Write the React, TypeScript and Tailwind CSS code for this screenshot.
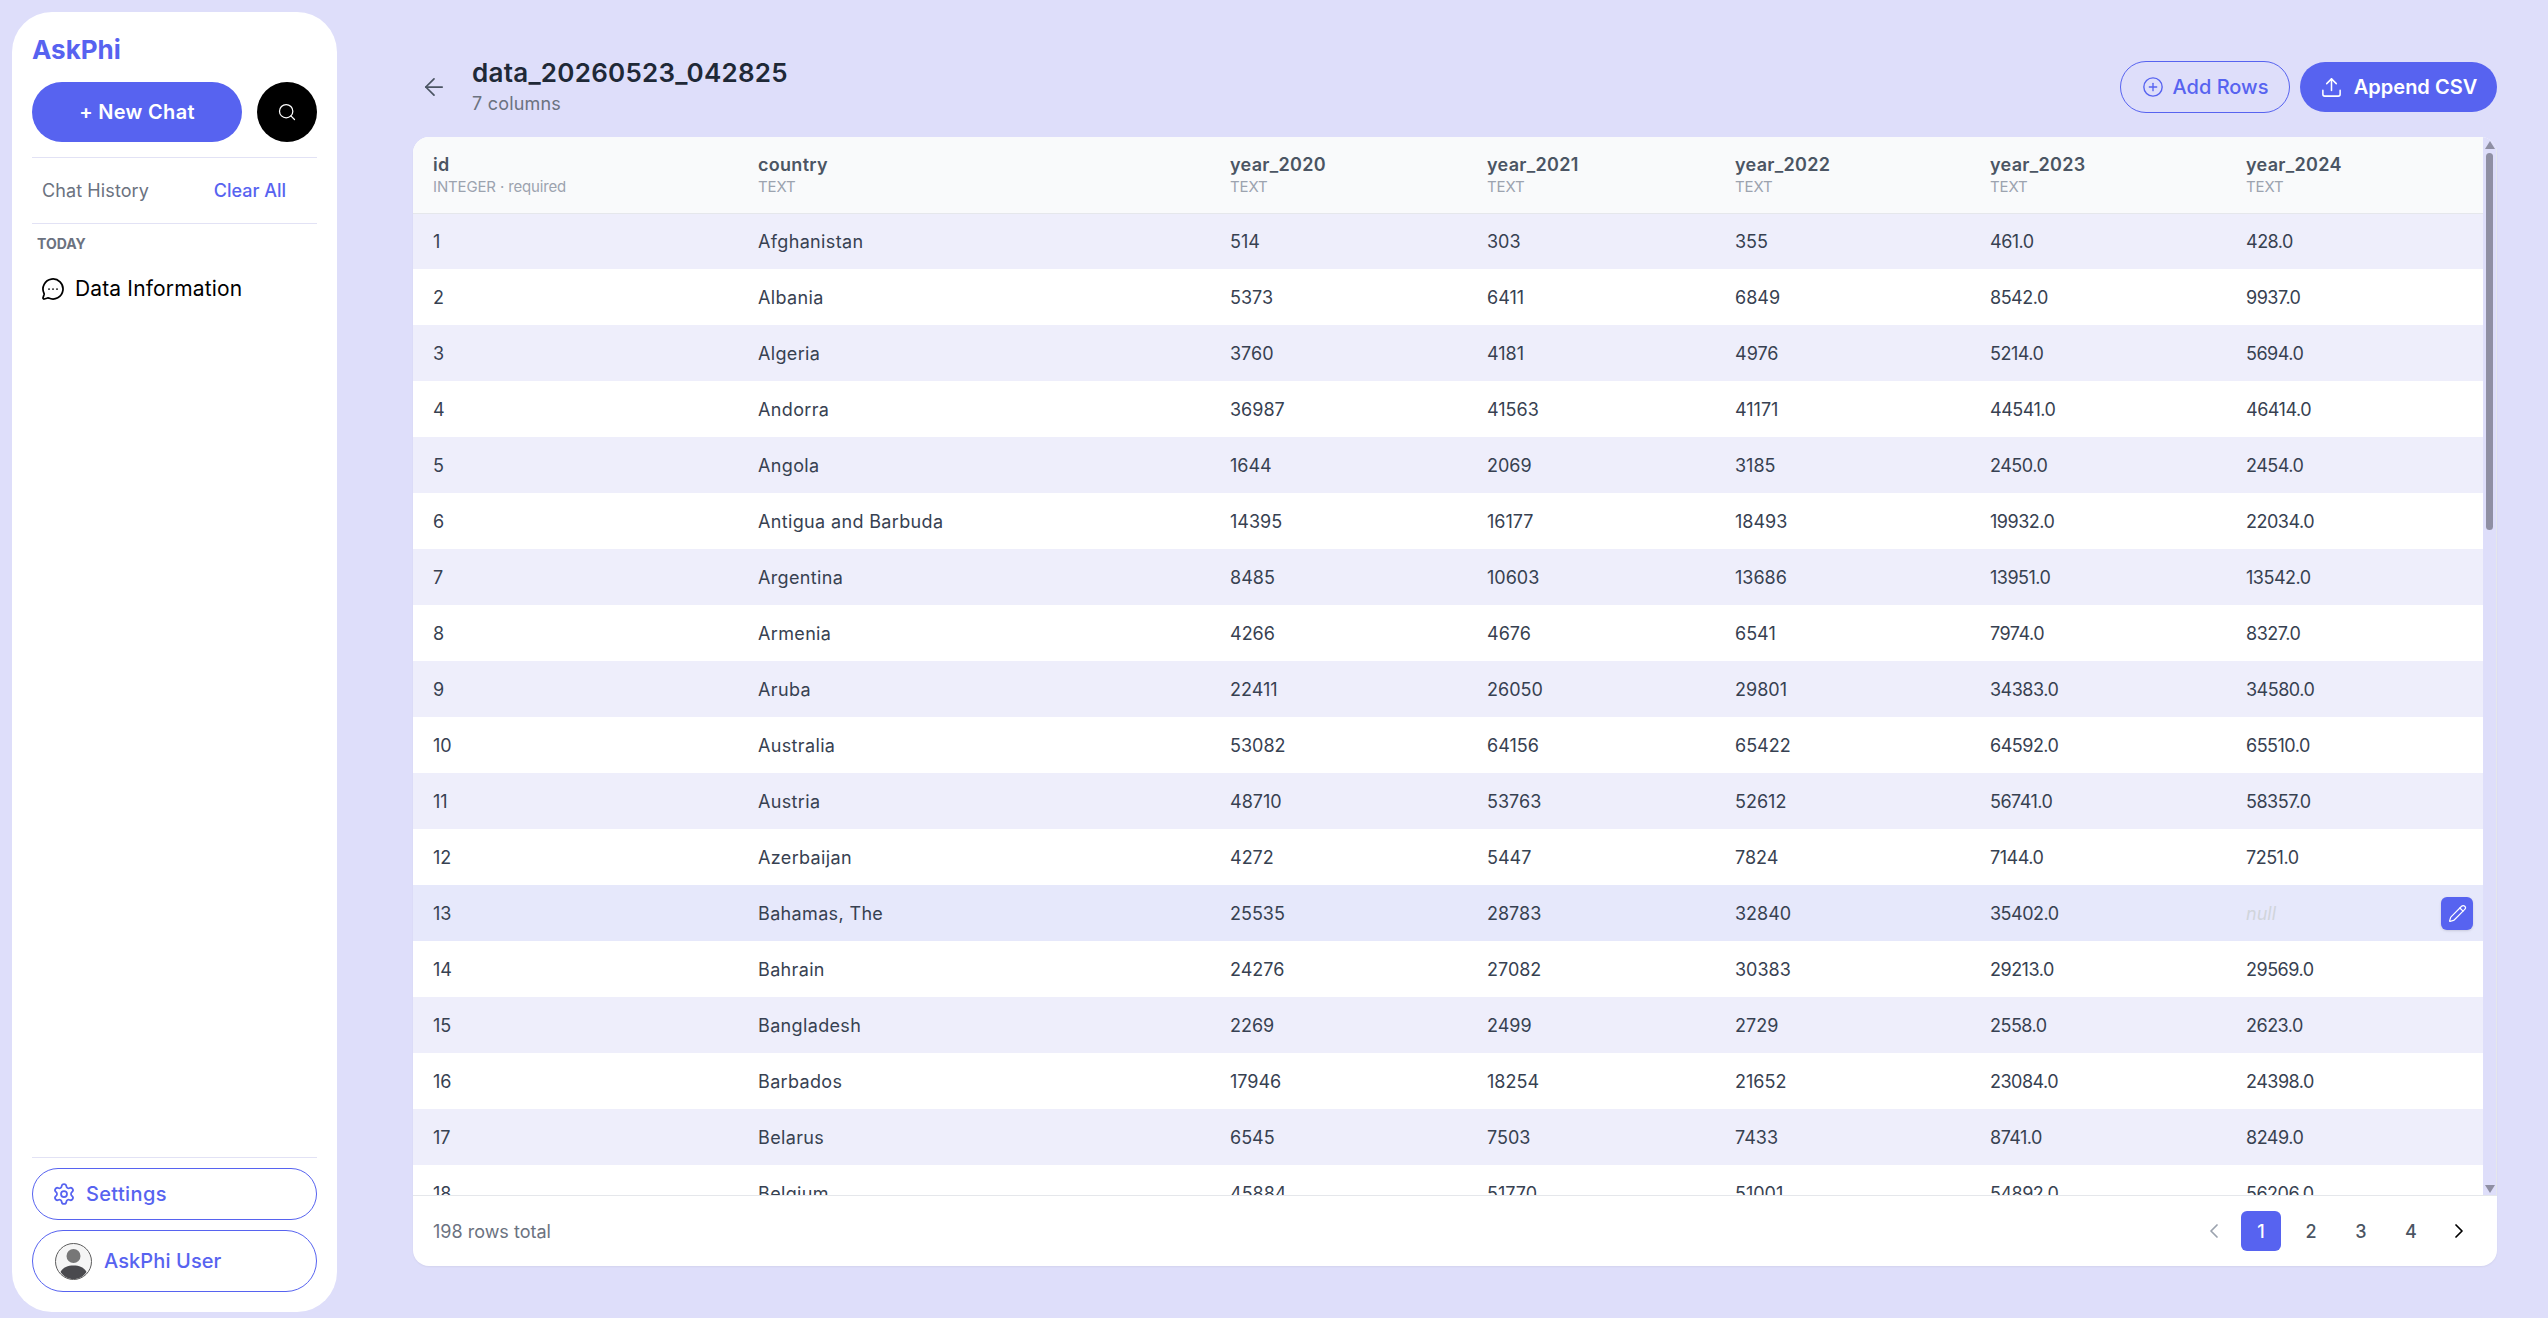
import React from "react";
import { Search, MessageCircleMore, Settings, ArrowLeft, CirclePlus, Upload, Pencil, ChevronLeft, ChevronRight } from "lucide-react";

const rows: string[][] = [
  ["1", "Afghanistan", "514", "303", "355", "461.0", "428.0"],
  ["2", "Albania", "5373", "6411", "6849", "8542.0", "9937.0"],
  ["3", "Algeria", "3760", "4181", "4976", "5214.0", "5694.0"],
  ["4", "Andorra", "36987", "41563", "41171", "44541.0", "46414.0"],
  ["5", "Angola", "1644", "2069", "3185", "2450.0", "2454.0"],
  ["6", "Antigua and Barbuda", "14395", "16177", "18493", "19932.0", "22034.0"],
  ["7", "Argentina", "8485", "10603", "13686", "13951.0", "13542.0"],
  ["8", "Armenia", "4266", "4676", "6541", "7974.0", "8327.0"],
  ["9", "Aruba", "22411", "26050", "29801", "34383.0", "34580.0"],
  ["10", "Australia", "53082", "64156", "65422", "64592.0", "65510.0"],
  ["11", "Austria", "48710", "53763", "52612", "56741.0", "58357.0"],
  ["12", "Azerbaijan", "4272", "5447", "7824", "7144.0", "7251.0"],
  ["13", "Bahamas, The", "25535", "28783", "32840", "35402.0", ""],
  ["14", "Bahrain", "24276", "27082", "30383", "29213.0", "29569.0"],
  ["15", "Bangladesh", "2269", "2499", "2729", "2558.0", "2623.0"],
  ["16", "Barbados", "17946", "18254", "21652", "23084.0", "24398.0"],
  ["17", "Belarus", "6545", "7503", "7433", "8741.0", "8249.0"],
  ["18", "Belgium", "45884", "51770", "51001", "54892.0", "56206.0"],
];

const columns = [
  { name: "id", type: "INTEGER · required" },
  { name: "country", type: "TEXT" },
  { name: "year_2020", type: "TEXT" },
  { name: "year_2021", type: "TEXT" },
  { name: "year_2022", type: "TEXT" },
  { name: "year_2023", type: "TEXT" },
  { name: "year_2024", type: "TEXT" },
];

export default function App() {
  return (
    <div className="flex h-[1318px] w-[2548px] overflow-hidden bg-[#dedefa] font-['Inter',sans-serif]">
      <aside className="m-3 mr-0 flex h-[1300px] w-[325px] flex-col rounded-[40px] bg-white px-5 pb-5">
        <div className="mt-[18px] h-[52px] text-[26px] font-bold leading-[40px] text-[#5763f0]">AskPhi</div>
        <div className="flex gap-[15px]">
          <button className="h-[60px] w-[210px] rounded-full bg-[#5763f0] text-[20px] font-semibold tracking-[0.3px] text-white">+ New Chat</button>
          <button className="flex h-[60px] w-[60px] items-center justify-center rounded-full bg-black text-white">
            <Search size={20} strokeWidth={1.5} />
          </button>
        </div>
        <div className="mt-[15px] flex h-[67px] items-center justify-between border-y border-[#e2e2f5] pl-[10px] pr-[31px] text-[18px]">
          <span className="tracking-[0.1px] text-[#6b7280]">Chat History</span>
          <span className="font-medium text-[#5763f0]">Clear All</span>
        </div>
        <div className="mt-[11px] pl-[5px] text-[14px] font-bold leading-[18px] text-[#6b7280]">TODAY</div>
        <div className="mt-[21px] flex items-center gap-[10px] pl-[9px] text-[21px] leading-[30px] text-black">
          <MessageCircleMore size={24} strokeWidth={1.75} />
          <span className="tracking-[0.15px]">Data Information</span>
        </div>
        <div className="mt-auto border-t border-[#e2e2f5] pt-[10px]">
          <button className="flex h-[52px] w-full items-center gap-[10px] rounded-full border border-[#5763f0] pl-[19px] text-[20px] font-medium text-[#5763f0]">
            <Settings size={24} strokeWidth={1.75} />
            <span className="tracking-[0.35px]">Settings</span>
          </button>
          <button className="mt-[10px] flex h-[62px] w-full items-center gap-[12px] rounded-full border border-[#5763f0] pl-[22px] text-[20px] font-medium text-[#5763f0]">
            <svg width="37" height="37" viewBox="0 0 37 37">
              <circle cx="18.5" cy="18.5" r="18" fill="#f5f5f5" stroke="#5c5c5c" strokeWidth="1" />
              <circle cx="18.5" cy="13" r="7" fill="#777777" />
              <path d="M5.5 29 C8 24 13 22.5 18.5 22.5 C24 22.5 29 24 31.5 29 C28.5 33.5 24 36 18.5 36 C13 36 8.5 33.5 5.5 29 Z" fill="#4a4a4e" />
            </svg>
            <span className="tracking-[0.1px]">AskPhi User</span>
          </button>
        </div>
      </aside>

      <main className="ml-[76px] flex w-[2084px] flex-col pt-[55px]">
        <header className="flex h-[70px] items-start justify-between">
          <div className="flex">
            <div className="flex w-[59px] items-start pt-[18px] pl-[7px] text-[#4b5563]">
              <ArrowLeft size={28} strokeWidth={1.5} />
            </div>
            <div>
              <div className="text-[26px] font-semibold leading-[36px] tracking-[0.25px] text-[#1f2937]">data_20260523_042825</div>
              <div className="text-[18px] leading-[26px] tracking-[0.2px] text-[#6b7280]">7 columns</div>
            </div>
          </div>
          <div className="mt-[6px] flex items-center gap-[10px]">
            <button className="flex h-[52px] w-[170px] items-center justify-center gap-[9px] rounded-full border border-[#5763f0] text-[20px] font-medium text-[#5763f0]">
              <CirclePlus size={22} strokeWidth={1.5} />
              <span>Add Rows</span>
            </button>
            <button className="flex h-[50px] w-[197px] items-center justify-center gap-[11px] rounded-full bg-[#5763f0] text-[20px] font-semibold text-white">
              <Upload size={23} strokeWidth={1.6} />
              <span>Append CSV</span>
            </button>
          </div>
        </header>

        <section className="mt-[12px] flex h-[1129px] flex-col overflow-hidden rounded-[16px] bg-white shadow-[0_1px_2px_rgba(0,0,0,0.05)]">
          <div className="flex min-h-0 flex-1">
            <div className="w-[2070px] overflow-hidden">
              <table className="w-[2070px] table-fixed border-collapse">
                <colgroup>
                  <col className="w-[325px]" />
                  <col className="w-[472px]" />
                  <col className="w-[257px]" />
                  <col className="w-[248px]" />
                  <col className="w-[255px]" />
                  <col className="w-[256px]" />
                  <col className="w-[257px]" />
                </colgroup>
                <thead>
                  <tr className="h-[76px] border-b border-[#e5e7eb] bg-[#f9fafb]">
                    {columns.map((c) => (
                      <th key={c.name} className="pl-5 text-left align-middle font-normal">
                        <div className="text-[18px] font-semibold leading-[24px] tracking-[0.3px] text-[#4b5563]">{c.name}</div>
                        <div className="text-[15px] leading-[20px] tracking-[-0.15px] text-[#9ca3af]">{c.type}</div>
                      </th>
                    ))}
                  </tr>
                </thead>
                <tbody>
                  {rows.map((r, i) => (
                    <tr key={r[0]} className={i === 12 ? "h-14 bg-[#e6e8fb]" : i % 2 === 0 ? "h-14 bg-[#eeeefb]" : "h-14 bg-white"}>
                      {r.map((v, j) => (
                        <td
                          key={j}
                          className={
                            j === 1
                              ? "relative pl-5 text-[18px] tracking-[0.35px] text-[#374151]"
                              : j >= 5
                              ? "relative pl-5 text-[18px] tracking-[-0.5px] text-[#374151]"
                              : "relative pl-5 text-[18px] text-[#374151]"
                          }
                        >
                          {v === "" ? (
                            <>
                              <span className="text-[18px] italic tracking-normal text-[#d1d5db]">null</span>
                              <span className="absolute right-[10px] top-[12px] flex h-[33px] w-8 items-center justify-center rounded-[6px] bg-[#5763f0] text-white shadow-sm">
                                <Pencil size={19} strokeWidth={1.5} />
                              </span>
                            </>
                          ) : (
                            v
                          )}
                        </td>
                      ))}
                    </tr>
                  ))}
                </tbody>
              </table>
            </div>
            <div className="flex w-[14px] flex-col items-center border-r border-[#e5e7eb] bg-[#dedefa] pt-[4px] pb-[2px]">
              <svg width="10" height="8" viewBox="0 0 10 8" className="shrink-0 fill-[#8f8fa3]"><path d="M5 0 L10 8 L0 8 Z" /></svg>
              <div className="mt-[4px] h-[377px] w-[7px] rounded-full bg-[#8f8fa3]" />
              <svg width="10" height="8" viewBox="0 0 10 8" className="mt-auto shrink-0 fill-[#8f8fa3]"><path d="M5 8 L10 0 L0 0 Z" /></svg>
            </div>
          </div>
          <footer className="flex h-[71px] shrink-0 items-center justify-between border-t border-[#e5e7eb] pl-5 pr-5">
            <span className="text-[18px] text-[#6b7280]">198 rows total</span>
            <div className="flex items-center gap-[10px] text-[18px] font-medium text-[#4b5563]">
              <span className="flex h-10 w-[34px] items-center justify-center text-[#9ca3af]"><ChevronLeft size={24} strokeWidth={1.75} /></span>
              <span className="flex h-10 w-10 items-center justify-center rounded-[6px] bg-[#5763f0] text-white">1</span>
              <span className="flex h-10 w-10 items-center justify-center">2</span>
              <span className="flex h-10 w-10 items-center justify-center">3</span>
              <span className="flex h-10 w-10 items-center justify-center">4</span>
              <span className="flex h-10 w-9 items-center justify-center text-black"><ChevronRight size={24} strokeWidth={1.75} /></span>
            </div>
          </footer>
        </section>
      </main>
    </div>
  );
}
